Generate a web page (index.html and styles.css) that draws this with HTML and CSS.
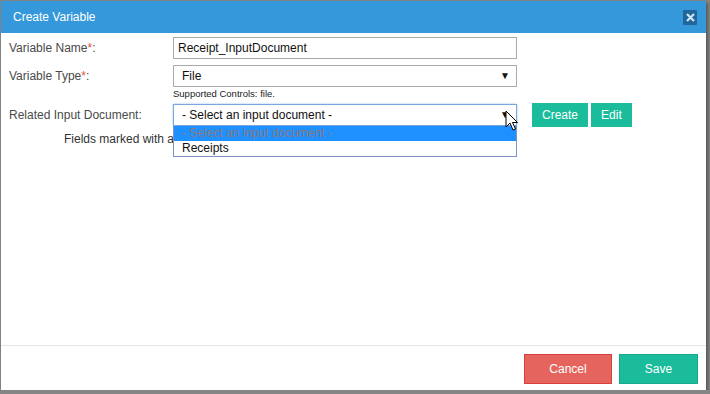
FILE: index.html
```html
<!DOCTYPE html>
<html>
	<head>
		<meta charset="utf-8">
		<meta name="viewport" content="width=device-width, initial-scale=1.0">
		<link rel="stylesheet" href="styles.css">
		<title>Create Variable</title>
	</head>
	<body>
		<div class="modal">
			<header class="modal-head">
				<h4>Create Variable</h4>
				<a class="close" href="javascript:;">
					<svg width="9" height="9" viewBox="0 0 9 9"><path d="M1 1L8 8M8 1L1 8" stroke="#cfe6f7" stroke-width="2.2"/></svg>
				</a>
			</header>
			<div class="modal-body">
				<div class="row">
					<label>Variable Name<em>*</em>:</label>
					<div class="field">
						<div class="control">Receipt_InputDocument</div>
					</div>
				</div>
				<div class="row">
					<label>Variable Type<em>*</em>:</label>
					<div class="field">
						<div class="control select">File<span class="arrow">&#9660;</span></div>
						<p class="help">Supported Controls: file.</p>
					</div>
				</div>
				<div class="row row-doc">
					<label>Related Input Document:</label>
					<div class="field">
						<div class="control select focus">- Select an input document -<span class="arrow">&#9660;</span></div>
						<ul class="dropdown">
							<li class="active">- Select an input document -</li>
							<li>Receipts</li>
						</ul>
						<svg class="cursor" width="14" height="22" viewBox="0 0 14 22">
							<path d="M1 1L1 17L5 13L8 20L10.5 19L7.5 12.5L12.5 12.5Z" fill="#fff" stroke="#000" stroke-width="1" stroke-linejoin="round"/>
						</svg>
					</div>
					<button class="btn btn-green">Create</button>
					<button class="btn btn-green">Edit</button>
				</div>
				<p class="note">Fields marked with asterisk (*) are required.</p>
			</div>
			<footer class="modal-foot">
				<button class="btn btn-red btn-lg cancel">Cancel</button>
				<button class="btn btn-green btn-lg save">Save</button>
			</footer>
		</div>
	</body>
</html>
```

FILE: styles.css
```css
* {
	margin: 0;
	padding: 0;
	list-style: none;
	box-sizing: border-box;
}

body {
	background-color: #858585;
	font-family: "Liberation Sans", Arial, sans-serif;
	font-size: 12px;
	color: #333;
}

.modal {
	margin: 1px 0 0 1px;
	width: 705px;
	height: 389px;
	display: flex;
	flex-direction: column;
	background-color: #fff;
	box-shadow: 2px 2px 3px rgba(0, 0, 0, 0.35);
}

.modal-head {
	height: 32px;
	padding: 0 9px 0 12px;
	display: flex;
	align-items: center;
	justify-content: space-between;
	background-color: #3498db;
}

.modal-head h4 {
	font-size: 12px;
	font-weight: 400;
	color: #fff;
}

.close {
	width: 14px;
	height: 15px;
	display: flex;
	align-items: center;
	justify-content: center;
	background-color: #21669a;
	border-radius: 1px;
}

.modal-body {
	flex: 1;
	padding: 4px 8px 0;
}

.row {
	display: flex;
	align-items: flex-start;
	margin-bottom: 6px;
}

.row label {
	width: 164px;
	line-height: 22px;
	color: #4a4a4a;
}

.row label em {
	font-style: normal;
	color: #e74c3c;
}

.field {
	position: relative;
	width: 344px;
}

.control {
	position: relative;
	height: 22px;
	padding: 0 8px 0 4px;
	border: 1px solid #aaa;
	background-color: #fff;
	line-height: 20px;
	color: #111;
}

.select {
	padding-left: 8px;
}

.arrow {
	position: absolute;
	right: 6px;
	top: 0;
	font-size: 10px;
	color: #111;
}

.focus {
	border-color: #7aa7e0;
	box-shadow: 0 0 2px #9ec2ee;
}

.help {
	font-size: 9.5px;
	line-height: 11px;
	padding-top: 1px;
	color: #222;
}

.row-doc {
	position: relative;
	margin-top: -1px;
	z-index: 2;
}

.dropdown {
	position: absolute;
	top: 22px;
	left: 0;
	width: 344px;
	border: 1px solid #7d94c4;
	border-top: 0;
	background-color: #fff;
}

.dropdown li {
	height: 15px;
	line-height: 14px;
	padding-left: 8px;
	color: #111;
}

.dropdown li.active {
	background-color: #1e90ff;
	color: #8a7a7c;
}

.cursor {
	position: absolute;
	right: -2px;
	top: 6px;
}

.btn {
	border: 0;
	font-family: inherit;
	font-size: 12px;
	color: #fff;
	cursor: pointer;
}

.row .btn {
	height: 24px;
	margin-top: -1px;
	padding: 0 10px;
	margin-left: 3px;
}

.row .btn:first-of-type {
	margin-left: 15px;
}

.btn-green {
	background-color: #1abc9c;
}

.btn-red {
	background-color: #e5655e;
	border: 1px solid #d9403a;
}

.note {
	position: relative;
	z-index: 1;
	padding-left: 55px;
	margin-top: -1px;
	color: #333;
}

.modal-foot {
	height: 45px;
	border-top: 1px solid #e5e5e5;
	display: flex;
	justify-content: flex-end;
	align-items: flex-start;
	padding: 8px 8px 0 0;
	gap: 7px;
}

.btn-lg {
	height: 30px;
}

.cancel {
	width: 88px;
}

.save {
	width: 79px;
	border: 1px solid #17a98c;
}
```
